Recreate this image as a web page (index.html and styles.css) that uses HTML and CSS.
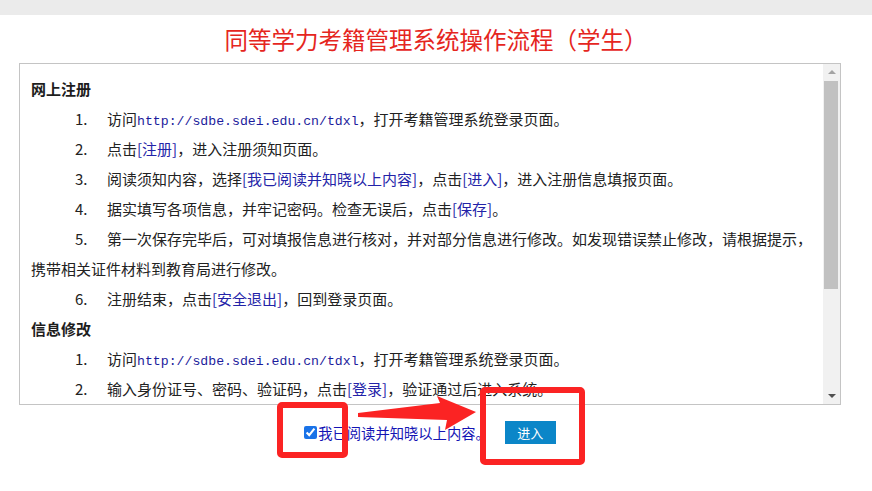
FILE: index.html
```html
<!DOCTYPE html>
<html>
    <head>
        <meta http-equiv="content-type" content="text/html; charset=utf-8" />
        <meta name="viewport" content="width=device-width, initial-scale=1.0">
        <title>同等学力考籍管理系统操作流程（学生）</title>
        <link rel="stylesheet" href="styles.css">
    </head>
    <body>
        <div class="topbar"></div>
        <h1 class="title">同等学力考籍管理系统操作流程（学生）</h1>
        <div class="notice">
            <div class="notice-text">
                <p class="section">网上注册</p>
                <p class="step"><span class="num">1.</span>访问<span class="url">http://sdbe.sdei.edu.cn/tdxl</span>，打开考籍管理系统登录页面。</p>
                <p class="step"><span class="num">2.</span>点击<span class="link">[注册]</span>，进入注册须知页面。</p>
                <p class="step"><span class="num">3.</span>阅读须知内容，选择<span class="link">[我已阅读并知晓以上内容]</span>，点击<span class="link">[进入]</span>，进入注册信息填报页面。</p>
                <p class="step"><span class="num">4.</span>据实填写各项信息，并牢记密码。检查无误后，点击<span class="link">[保存]</span>。</p>
                <p class="step"><span class="num">5.</span>第一次保存完毕后，可对填报信息进行核对，并对部分信息进行修改。如发现错误禁止修改，请根据提示，携带相关证件材料到教育局进行修改。</p>
                <p class="step"><span class="num">6.</span>注册结束，点击<span class="link">[安全退出]</span>，回到登录页面。</p>
                <p class="section">信息修改</p>
                <p class="step"><span class="num">1.</span>访问<span class="url">http://sdbe.sdei.edu.cn/tdxl</span>，打开考籍管理系统登录页面。</p>
                <p class="step"><span class="num">2.</span>输入身份证号、密码、验证码，点击<span class="link">[登录]</span>，验证通过后进入系统。</p>
                <p class="step"><span class="num">3.</span>点击<span class="link">[信息修改]</span>，对允许修改的信息进行修改。</p>
                <p class="step"><span class="num">4.</span>修改完毕后，点击<span class="link">[保存]</span>。</p>
            </div>
            <div class="scrollbar">
                <div class="sb-btn"><span class="arrow-up"></span></div>
                <div class="sb-thumb"></div>
                <div class="sb-track"></div>
                <div class="sb-btn"><span class="arrow-down"></span></div>
            </div>
        </div>
        <div class="agree">
            <label class="agree-label"><input type="checkbox" checked>我已阅读并知晓以上内容。</label>
            <button class="enter-btn">进入</button>
        </div>

        <!-- annotation marks drawn over the screenshot -->
        <div class="mark mark-check"></div>
        <div class="mark mark-btn"></div>
        <svg class="mark-arrow" width="872" height="491" viewBox="0 0 872 491">
            <polygon points="358,413 440,403 437,396 476,412 445,430 447,420 358,417" fill="#fb2323"/>
        </svg>
    </body>
</html>
```

FILE: styles.css
```css
* {
    margin: 0;
    padding: 0;
    box-sizing: border-box;
}

body {
    background: #fff;
    font-family: "Noto Sans CJK SC", "Liberation Sans", sans-serif;
    color: #222;
    width: 872px;
    height: 491px;
    overflow: hidden;
    position: relative;
}

.topbar {
    height: 15px;
    background: #ebebeb;
}

.title {
    margin-top: 8px;
    height: 40px;
    line-height: 32px;
    text-align: center;
    font-size: 23.5px;
    font-weight: normal;
    color: #e5261e;
}

.notice {
    display: flex;
    margin-left: 19px;
    width: 822px;
    height: 342px;
    border: 1px solid #c4c4c4;
}

.notice-text {
    flex: 1;
    overflow: hidden;
    padding: 9.5px 4px 0 11px;
    font-size: 15px;
    line-height: 30px;
}

.section {
    font-weight: bold;
    color: #1d1d1d;
}

.step {
    text-indent: 44px;
}

.num {
    display: inline-block;
    width: 32px;
    text-indent: 0;
}

.url {
    font-family: "Liberation Mono", monospace;
    font-size: 13.2px;
    line-height: 1;
    color: #1c1c9c;
}

.link {
    color: #2323a8;
}

.scrollbar {
    width: 17px;
    display: flex;
    flex-direction: column;
    background: #f1f1f1;
}

.sb-btn {
    height: 16px;
    display: flex;
    align-items: center;
    justify-content: center;
}

.arrow-up {
    border-left: 4px solid transparent;
    border-right: 4px solid transparent;
    border-bottom: 4px solid #a3a3a3;
}

.arrow-down {
    border-left: 4px solid transparent;
    border-right: 4px solid transparent;
    border-top: 4px solid #505050;
}

.sb-thumb {
    height: 208px;
    margin: 1px 2px 0 1px;
    background: #c1c1c1;
}

.sb-track {
    flex: 1;
}

.agree {
    display: flex;
    justify-content: center;
    align-items: center;
    gap: 15px;
    margin-top: 16px;
    padding-right: 12px;
    height: 23px;
}

.agree-label {
    display: flex;
    align-items: center;
    font-size: 14.3px;
    color: #1414b4;
}

.agree-label input {
    width: 13px;
    height: 13px;
    margin: 0 1px 0 0;
    accent-color: #1a73e8;
}

.enter-btn {
    width: 51px;
    height: 23px;
    border: none;
    background: #0b86c8;
    color: #fff;
    font-family: "Noto Sans CJK SC", sans-serif;
    font-size: 13px;
}

.mark {
    position: absolute;
    border: 6px solid #fb2323;
    border-radius: 5px;
}

.mark-check {
    left: 277px;
    top: 402px;
    width: 71px;
    height: 56px;
}

.mark-btn {
    left: 480px;
    top: 387px;
    width: 105px;
    height: 78px;
}

.mark-arrow {
    position: absolute;
    left: 0;
    top: 0;
}
```
